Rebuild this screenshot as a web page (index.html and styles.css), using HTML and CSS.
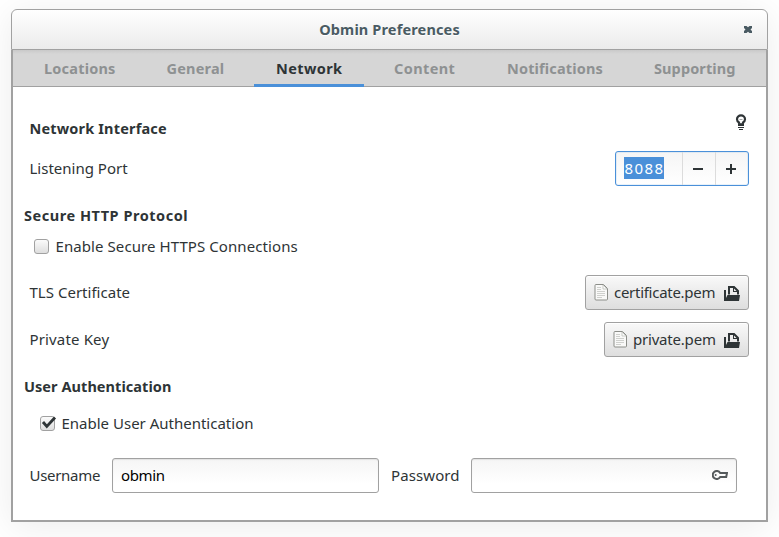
FILE: index.html
```html
<!DOCTYPE html>
<html lang="en">
<head>
<meta charset="utf-8">
<title>Obmin Preferences</title>
<link rel="stylesheet" href="styles.css">
</head>
<body>
<div class="window">
  <header class="titlebar">
    <h1 class="title">Obmin Preferences</h1>
    <svg class="close" width="8" height="7" viewBox="0 0 8 7"><path d="M0 0h2.500L4 1.200 5.500 0H8v2L6.500 3.500 8 5v2H5.500L4 5.800 2.500 7H0V5l1.500-1.500L0 2z" fill="#4a5b63"/></svg>
  </header>
  <nav class="tabs">
    <span class="tab t-locations">Locations</span>
    <span class="tab t-general">General</span>
    <span class="tab t-network active">Network</span>
    <span class="tab t-content">Content</span>
    <span class="tab t-notifications">Notifications</span>
    <span class="tab t-supporting">Supporting</span>
  </nav>
  <main class="content">
    <div class="row row-head">
      <h2 class="ls-ni">Network Interface</h2>
      <svg class="bulb" width="12" height="17" viewBox="0 0 12 17"><path d="M4 9.800V8.400Q2 7.500 2 5.300a4 3.900 0 0 1 8 0q0 2.200-2 3.100v1.400" fill="none" stroke="#2e3436" stroke-width="2.200"/><path d="M3 9.200h6v2.800H3z" fill="#2e3436"/><path d="M4.500 5.500h3" stroke="#8a8e8f" stroke-width=".8"/><path d="M3 13h6v1H3zM4 15h4v1H4z" fill="#2e3436"/></svg>
    </div>
    <div class="row row-port">
      <label class="ls-port">Listening Port</label>
      <div class="spin">
        <div class="spin-value"><span class="selected">8088</span></div>
        <div class="spin-button"><svg width="10" height="10" viewBox="0 0 10 10"><path d="M0 4h10v2H0z" fill="#2e3436"/></svg></div>
        <div class="spin-button"><svg width="10" height="10" viewBox="0 0 10 10"><path d="M0 4h4V0h2v4h4v2H6v4H4V6H0z" fill="#2e3436"/></svg></div>
      </div>
    </div>
    <h2 class="section ls-http">Secure HTTP Protocol</h2>
    <div class="check-row check-https"><span class="checkbox"></span><label class="ls-https">Enable Secure HTTPS Connections</label></div>
    <div class="row row-file row-tls">
      <label class="ls-tls">TLS Certificate</label>
      <div class="file-button">
        <svg class="doc" width="14" height="17" viewBox="0 0 14 17"><path d="M2 .5h7.500L13.500 4.500v10.500a1 1 0 0 1-1 1h-10.500a1 1 0 0 1-1-1v-13.500a1 1 0 0 1 1-1z" fill="#f9f9f8" stroke="#8c8e89"/><path d="M9 1v4h4z" fill="#fff" stroke="#b5b7b3" stroke-width=".7"/><path d="M3 3.500h4M3 5.500h4M3 7.500h8M3 9.500h8M3 11.500h8M3 13.500h5" stroke="#cfd0cd"/></svg>
        <span class="ls-cert">certificate.pem</span>
        <svg class="open" width="16" height="15" viewBox="0 0 16 15"><path d="M0 4h2v8l1.500-3H16l-1 6H0z" fill="#2e3436"/><path d="M5 8.500V1h5L14 5v3.500" fill="none" stroke="#2e3436" stroke-width="2"/><path d="M9 1h1.500L14 4.500V6H9z" fill="#2e3436"/><path d="M10 2.500V5h2.500z" fill="#eee"/></svg>
      </div>
    </div>
    <div class="row row-file row-key">
      <label class="ls-key">Private Key</label>
      <div class="file-button">
        <svg class="doc" width="14" height="17" viewBox="0 0 14 17"><path d="M2 .5h7.500L13.500 4.500v10.500a1 1 0 0 1-1 1h-10.500a1 1 0 0 1-1-1v-13.500a1 1 0 0 1 1-1z" fill="#f9f9f8" stroke="#8c8e89"/><path d="M9 1v4h4z" fill="#fff" stroke="#b5b7b3" stroke-width=".7"/><path d="M3 3.500h4M3 5.500h4M3 7.500h8M3 9.500h8M3 11.500h8M3 13.500h5" stroke="#cfd0cd"/></svg>
        <span class="ls-priv">private.pem</span>
        <svg class="open" width="16" height="15" viewBox="0 0 16 15"><path d="M0 4h2v8l1.500-3H16l-1 6H0z" fill="#2e3436"/><path d="M5 8.500V1h5L14 5v3.500" fill="none" stroke="#2e3436" stroke-width="2"/><path d="M9 1h1.500L14 4.500V6H9z" fill="#2e3436"/><path d="M10 2.500V5h2.500z" fill="#eee"/></svg>
      </div>
    </div>
    <h2 class="section ls-auth">User Authentication</h2>
    <div class="check-row check-auth"><span class="checkbox"><svg class="tick" width="15" height="15" viewBox="0 0 15 15"><path d="M3 6l3.800 4.500L15 1.500" fill="none" stroke="#2e3436" stroke-width="2.800"/></svg></span><label class="ls-enable">Enable User Authentication</label></div>
    <div class="credentials">
      <label class="user-label">Username</label>
      <div class="entry entry-user">obmin</div>
      <label class="pass-label">Password</label>
      <div class="entry entry-pass"><svg width="16" height="10" viewBox="0 0 16 10"><path d="M8.200 3H15l-.8 4H8.200A4 4 0 1 1 8.200 3z" fill="none" stroke="#555a5c" stroke-width="2"/><circle cx="3.700" cy="5" r="1" fill="#555a5c"/></svg></div>
    </div>
  </main>
</div>
</body>
</html>
```
FILE: styles.css
```css
* { box-sizing: border-box; }

body {
  margin: 0;
  padding: 9px 11px 15px;
  height: 537px;
  overflow: hidden;
  background: #fff;
  color: #2e3436;
  font: 15px/20px "Noto Sans", "Open Sans", sans-serif;
}

h1, h2 { margin: 0; font-size: 14.5px; line-height: 20px; font-weight: 700; }
svg { display: block; flex: none; }
label, h1, h2, span { white-space: nowrap; }

.window {
  width: 757px;
  height: 513px;
  display: flex;
  flex-direction: column;
  border-radius: 6px 6px 0 0;
  box-shadow: 0 5px 36px rgba(0, 0, 0, .08);
}

.titlebar {
  display: flex;
  justify-content: center;
  height: 41px;
  padding-top: 9px;
  border: 1px solid #a1a1a1;
  border-radius: 6px 6px 0 0;
  background: linear-gradient(#fff, #ebebeb);
  position: relative;
}

.title { color: #4a5b63; letter-spacing: .15px; text-shadow: 0 1px #fff; }
.close { position: absolute; right: 15.5px; top: 16px; }

.tabs {
  display: flex;
  gap: 8px;
  height: 37px;
  padding-left: 9px;
  border: solid #a1a1a1;
  border-width: 0 2px 1px;
  background: linear-gradient(#c9c9c9, #d6d6d6 4px);
}

.tab {
  height: 37px;
  padding: 8px 0 0 22px;
  color: #8e9192;
  font-size: 14.5px;
  font-weight: 700;
}

.active { color: #2e3436; border-bottom: 3px solid #4a90d9; }
.t-locations { width: 115px; letter-spacing: .2px; }
.t-general { width: 101px; padding-left: 21.5px; letter-spacing: .2px; }
.t-network { width: 110px; letter-spacing: .4px; }
.t-content { width: 105px; letter-spacing: .4px; }
.t-notifications { width: 139px; letter-spacing: .15px; }
.t-supporting { width: 125px; letter-spacing: .1px; }

.content {
  flex: 1;
  padding: 26px 17px 0 11px;
  border: solid #a1a1a1;
  border-width: 0 2px 2px;
  background: #fff;
}

.row { display: flex; justify-content: space-between; padding-left: 5.5px; }
.row-head { height: 38px; }
.row-head h2 { padding-top: 5px; }
.bulb { margin: 1px 2px 0 0; }
.row-port { height: 35px; }
.row-port label, .row-file label { padding-top: 7px; }
.row-file { height: 35px; }
.row-tls { margin-top: 19px; }
.row-key { margin-top: 12px; }

.spin {
  display: flex;
  width: 134px;
  height: 35px;
  border: 1px solid #4a90d9;
  border-radius: 3px;
  background: linear-gradient(#f5f5f5, #fff);
  box-shadow: inset 0 0 0 1px rgba(74, 144, 217, .12);
}

.spin-value { width: 66px; padding: 5px 0 0 8px; }
.selected {
  display: block;
  width: 40px;
  height: 22px;
  line-height: 23px;
  background: #4a90d9;
  color: #fff;
  letter-spacing: 1.4px;
  padding-left: .5px;
}
.spin-button {
  display: flex;
  align-items: center;
  width: 33px;
  padding-left: 10px;
  border-left: 1px solid #dcdcdc;
}

.section { margin-top: 19px; }

.check-row { display: flex; }
.check-https { padding: 11px 0 0 10px; }
.check-auth { padding: 17px 0 0 16px; }
.checkbox {
  width: 15px;
  height: 15px;
  margin: 3px 6.5px 0 0;
  border: 1px solid #a1a1a1;
  border-radius: 3px;
  background: linear-gradient(#fbfbfb, #dedede);
}
.tick { margin: -1px; overflow: visible; }

.file-button {
  display: flex;
  height: 35px;
  padding: 6px 8px 0;
  border: 1px solid #a1a1a1;
  border-radius: 3px;
  background: linear-gradient(#f9f9f9, #dedede);
  box-shadow: inset 0 1px #fff;
}
.doc { margin: 2px 6px 0 0; }
.open { margin: 4px 0 0 8px; }

.credentials { display: flex; padding: 25px 0 0 5.5px; height: 60px; }
.credentials label { padding-top: 7px; }
.user-label { width: 82.5px; letter-spacing: -.3px; }
.pass-label { width: 80px; letter-spacing: .1px; }
.entry {
  height: 35px;
  padding: 6px 8px;
  border: 1px solid #a1a1a1;
  border-radius: 3px;
  background: linear-gradient(#f5f5f5, #fff 75%);
  box-shadow: inset 0 1px 1px rgba(0, 0, 0, .08);
  color: #000;
}
.entry-user { width: 267px; margin-right: 12px; letter-spacing: -.35px; }
.entry-pass { width: 266px; display: flex; justify-content: flex-end; padding-top: 11px; }

.ls-ni { letter-spacing: .17px; }
.ls-http { letter-spacing: .53px; }
.ls-https { letter-spacing: .08px; }
.ls-tls { letter-spacing: .02px; }
.ls-cert { width: 102px; letter-spacing: -.28px; }
.ls-key { letter-spacing: .15px; }
.ls-priv { width: 83px; letter-spacing: -.2px; }
.ls-auth { letter-spacing: .06px; }
```
